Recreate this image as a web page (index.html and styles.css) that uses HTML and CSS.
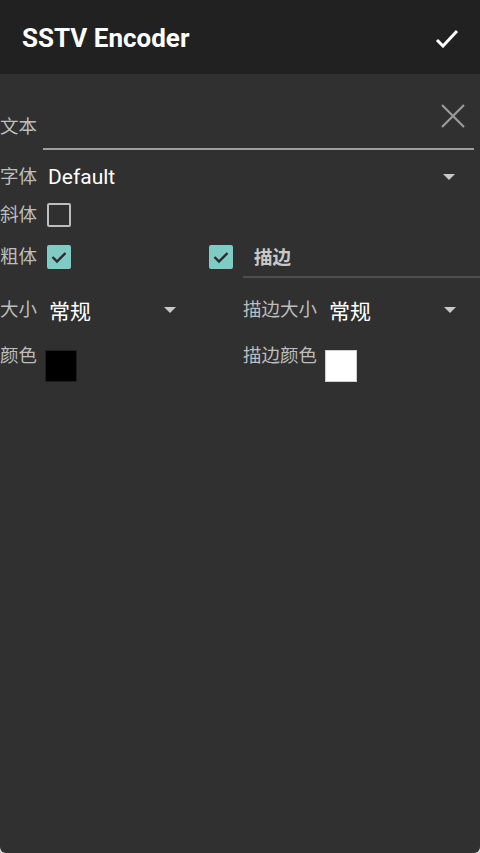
FILE: index.html
```html
<html>
  <head>
    <meta charset="utf-8">
    <link rel="stylesheet" href="styles.css">
  </head>
  <body>
    <div class="screen">
      <div class="toolbar">
        <span class="title">SSTV Encoder</span>
        <svg class="done" width="26" height="20" viewBox="0 0 26 20"><polyline points="3,12 9,18 23,3" fill="none" stroke="#fff" stroke-width="3"/></svg>
      </div>
      <div class="content">
        <div class="text-row">
          <label class="lbl">文本</label>
          <div class="text-field">
            <svg class="clear" width="24" height="24" viewBox="0 0 24 24"><path d="M1 1L23 23M23 1L1 23" stroke="#9a9a9a" stroke-width="2.2"/></svg>
          </div>
        </div>
        <div class="row font-row">
          <label class="lbl">字体</label>
          <div class="spinner wide"><span class="value">Default</span><span class="arrow"></span></div>
        </div>
        <div class="row italic-row">
          <label class="lbl">斜体</label>
          <span class="box"></span>
        </div>
        <div class="grid bold-row">
          <div class="cell">
            <label class="lbl">粗体</label>
            <span class="box on"><svg width="20" height="20" viewBox="0 0 20 20"><polyline points="3.5,10 8,14.5 16.5,6" fill="none" stroke="#2b2b2b" stroke-width="2.4"/></svg></span>
            <span class="box on push"><svg width="20" height="20" viewBox="0 0 20 20"><polyline points="3.5,10 8,14.5 16.5,6" fill="none" stroke="#2b2b2b" stroke-width="2.4"/></svg></span>
          </div>
          <div class="cell">
            <div class="stroke-field">描边</div>
          </div>
        </div>
        <div class="grid size-row">
          <div class="cell">
            <label class="lbl">大小</label>
            <div class="spinner"><span class="value">常规</span><span class="arrow"></span></div>
          </div>
          <div class="cell">
            <label class="lbl">描边大小</label>
            <div class="spinner"><span class="value">常规</span><span class="arrow"></span></div>
          </div>
        </div>
        <div class="grid color-row">
          <div class="cell">
            <label class="lbl">颜色</label>
            <span class="swatch black"></span>
          </div>
          <div class="cell">
            <label class="lbl">描边颜色</label>
            <span class="swatch white"></span>
          </div>
        </div>
      </div>
    </div>
  </body>
</html>
```

FILE: styles.css
```css
html, body { margin:0; padding:0; background:#d8d8d8; }
body { font-family:Roboto, "Noto Sans CJK SC", sans-serif; }
.screen { width:480px; height:853px; background:#303030; border-radius:0 0 6px 6px; overflow:hidden; }
.toolbar { height:74px; background:#212121; display:flex; align-items:center; padding:0 20px 0 22px; box-sizing:border-box; }
.title { color:#fff; font-size:26px; font-weight:bold; flex:1; margin-top:2px; }
.done { margin-top:2px; }
.lbl { color:#bdbdbd; font-size:18.5px; line-height:24px; white-space:nowrap; }
.value { color:#fff; font-size:21px; }
.text-row { display:flex; height:54px; margin-top:22px; padding-right:6px; }
.text-row .lbl { margin-top:19px; }
.text-field { flex:1; margin-left:6px; border-bottom:2px solid #9e9e9e; display:flex; justify-content:flex-end; align-items:flex-start; padding:8px 9px 0 0; }
.row { display:flex; align-items:center; }
.font-row { height:44px; margin-top:5px; }
.italic-row { height:26px; margin-top:3px; }
.box { width:20px; height:20px; border:2px solid #bdbdbd; border-radius:2px; margin-left:10px; display:inline-flex; align-items:center; justify-content:center; }
.box.on { background:#80cbc4; border-color:#80cbc4; }
.box.push { margin-left:auto; margin-right:10px; }
.spinner { display:flex; align-items:center; justify-content:space-between; width:145px; margin-left:8px; padding:0 14px 0 4px; box-sizing:border-box; }
.spinner.wide { flex:1; width:auto; margin-left:8px; margin-right:11px; padding-left:3px; padding-right:14px; }
.arrow { width:0; height:0; border-left:6px solid transparent; border-right:6px solid transparent; border-top:6px solid #c8c8c8; }
.grid { display:grid; grid-template-columns:243px 1fr; }
.cell { display:flex; align-items:center; }
.bold-row { margin-top:17px; }
.bold-row .cell { align-items:flex-start; height:33px; }
.stroke-field { flex:1; line-height:26px; height:26px; padding-bottom:5px; border-bottom:2px solid #4f4f4f; color:#c8c8c8; font-size:18.5px; font-weight:bold; padding-left:11px; }
.size-row { margin-top:12px; height:40px; }
.color-row { margin-top:16px; }
.color-row .cell { align-items:flex-start; }
.color-row .lbl { line-height:20px; }
.swatch { width:32px; height:32px; box-sizing:border-box; margin-top:4px; margin-left:8px; }
.swatch.black { background:#000; border:1px solid #1f1f1f; }
.swatch.white { background:#fff; border:1px solid #d0d0d0; }
```
